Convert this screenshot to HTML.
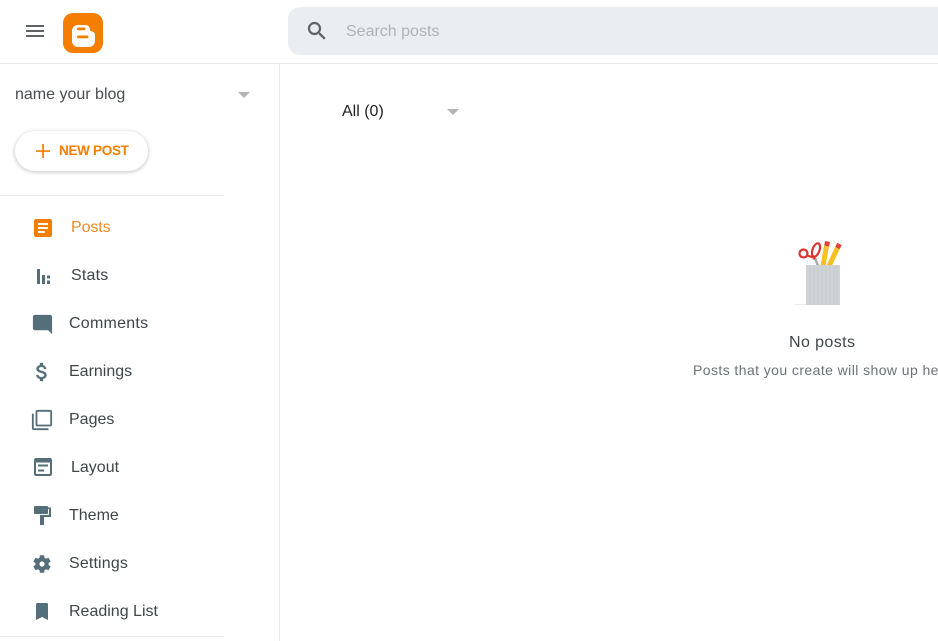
<!DOCTYPE html>
<html><head><meta charset="utf-8"><style>
html,body{margin:0;padding:0;background:#fff}
#p{position:relative;width:938px;height:641px;overflow:hidden;background:#fff;font-family:"Liberation Sans",sans-serif;font-size:16px;color:#3c4043}
#p>*{position:absolute}
.t{white-space:nowrap;line-height:20px}
.n{color:#3f4549}
svg.i{fill:#546e7a;width:24px;height:24px}
.c{width:0;height:0;border-left:6px solid transparent;border-right:6px solid transparent;border-top:6px solid #b4b4b4}
</style></head><body><div id="p">
<div style="left:0;top:63px;width:938px;height:1px;background:#e8eaed"></div>
<div style="left:279px;top:64px;width:1px;height:577px;background:#e8eaed"></div>
<div style="left:0;top:195px;width:224px;height:1px;background:#e8eaed"></div>
<div style="left:0;top:636px;width:224px;height:1px;background:#e8eaed"></div>

<div style="left:26px;top:25px;width:18px;height:2px;background:#5f6368"></div>
<div style="left:26px;top:30px;width:18px;height:2px;background:#5f6368"></div>
<div style="left:26px;top:35px;width:18px;height:2px;background:#5f6368"></div>

<svg style="left:63px;top:13px" width="40" height="40" viewBox="0 0 40 40"><rect width="40" height="40" rx="10" fill="#f57d00"/><path d="M15 12h7c3 0 5 2 5 4.500 0 1 .5 1.500 2 2 2 .6 3 1.600 3 3.500v6c0 3.500-2.800 6-6 6H15c-3.500 0-6-2.500-6-6V18c0-3.500 2.500-6 6-6z" fill="#fff"/><rect x="14" y="14.500" width="8.500" height="2.800" rx="1.400" fill="#f57d00"/><rect x="14" y="22.500" width="11.500" height="2.800" rx="1.400" fill="#f57d00"/></svg>

<div style="left:288px;top:7px;width:670px;height:48px;background:#ebeef1;border-radius:12px"></div>
<svg style="left:305px;top:19px;fill:#5f6368" width="24" height="24" viewBox="0 0 24 24"><path stroke="#5f6368" stroke-width=".3" d="M15.500 14h-.79l-.28-.27C15.410 12.590 16 11.110 16 9.500 16 5.910 13.090 3 9.500 3S3 5.910 3 9.500 5.910 16 9.500 16c1.610 0 3.090-.59 4.230-1.570l.27.28v.79l5 4.990L20.490 19l-4.990-5zm-6 0C7.010 14 5 11.990 5 9.500S7.010 5 9.500 5 14 7.010 14 9.500 11.990 14 9.500 14z"/></svg>
<div class="t" style="left:346px;top:22px;color:#aeb3b7">Search posts</div>

<div class="t" style="left:15px;top:85px;color:#4a4d50">name your blog</div>
<div class="c" style="left:238px;top:92px"></div>

<div style="left:15px;top:131px;width:133px;height:40px;border-radius:20px;background:#fff;box-shadow:0 1px 3px 1px rgba(60,64,67,.22)"></div>
<svg style="left:36px;top:144px" width="14" height="14" viewBox="0 0 14 14"><path d="M6.200 0h1.700v6.200H14v1.700H7.900V14H6.200V7.900H0V6.200h6.200z" fill="#f57d00"/></svg>
<div class="t" style="left:59px;top:141px;font-size:13.500px;font-weight:bold;color:#f57d00;letter-spacing:-.3px">NEW POST</div>

<svg class="i" style="left:31px;top:216px;fill:#f57d00" viewBox="0 0 24 24"><path d="M19 3H5c-1.100 0-2 .9-2 2v14c0 1.100.9 2 2 2h14c1.100 0 2-.9 2-2V5c0-1.100-.9-2-2-2zm-5 14H7v-2h7v2zm3-4H7v-2h10v2zm0-4H7V7h10v2z"/></svg>
<div class="t" style="left:71px;top:218px;color:#f08a24;letter-spacing:-.1px">Posts</div>

<svg style="left:37px;top:269px;fill:#546e7a" width="13" height="15" viewBox="0 0 13 15"><path d="M0 0h3v15H0zM5 6h3v9H5zM10 6.500h3v3h-3zM10 11.500h3V15h-3z"/></svg>
<div class="t n" style="left:71px;top:266px;letter-spacing:.2px">Stats</div>

<svg class="i" style="left:31px;top:313px;width:23px;height:23px" viewBox="0 0 24 24"><path d="M21.990 4c0-1.100-.89-2-1.990-2H4c-1.100 0-2 .9-2 2v12c0 1.100.9 2 2 2h14l4 4-.01-18z"/></svg>
<div class="t n" style="left:69px;top:314px;letter-spacing:.25px">Comments</div>

<svg class="i" style="left:30px;top:360px" viewBox="0 0 24 24"><path stroke="#546e7a" stroke-width=".3" d="M11.800 10.900c-2.270-.59-3-1.200-3-2.150 0-1.090 1.010-1.850 2.700-1.850 1.780 0 2.440.85 2.500 2.100h2.210c-.07-1.720-1.120-3.300-3.210-3.810V3h-3v2.160c-1.940.42-3.500 1.680-3.500 3.610 0 2.310 1.910 3.460 4.700 4.130 2.500.6 3 1.480 3 2.410 0 .69-.49 1.790-2.700 1.790-2.060 0-2.870-.92-2.980-2.100h-2.200c.12 2.190 1.760 3.420 3.680 3.830V21h3v-2.150c1.950-.37 3.500-1.500 3.500-3.550 0-2.840-2.430-3.810-4.700-4.400z"/></svg>
<div class="t n" style="left:69px;top:362px">Earnings</div>

<svg class="i" style="left:31px;top:409px;width:22px;height:22px" viewBox="0 0 24 24"><path d="M3 5H1v16c0 1.100.9 2 2 2h16v-2H3V5zm18-4H7c-1.100 0-2 .9-2 2v14c0 1.100.9 2 2 2h14c1.100 0 2-.9 2-2V3c0-1.100-.9-2-2-2zm0 16H7V3h14v14z"/></svg>
<div class="t n" style="left:69px;top:410px">Pages</div>

<svg class="i" style="left:31px;top:455px" viewBox="0 0 24 24"><path d="M19 3H5c-1.100 0-2 .9-2 2v14c0 1.100.9 2 2 2h14c1.100 0 2-.9 2-2V5c0-1.100-.9-2-2-2zm0 16H5V7.500h14V19zm-2-7.500H7v-2h10v2zm-4 5H7v-2h6v2z"/></svg>
<div class="t n" style="left:71px;top:458px">Layout</div>

<svg style="left:34px;top:506px;fill:#546e7a" width="18" height="20" viewBox="0 0 18 20"><path d="M1 0h12c.6 0 1 .4 1 1v6c0 .6-.4 1-1 1H1C.4 8 0 7.600 0 7V1c0-.6.4-1 1-1z"/><path d="M14 1.500h3V11h-7v8H6V9h8.500V8.500H15V3h-1z"/></svg>
<div class="t n" style="left:69px;top:506px">Theme</div>

<svg class="i" style="left:31px;top:553px;width:22px;height:22px" viewBox="0 0 24 24"><path fill-rule="evenodd" d="M19.140 12.940c.04-.3.06-.61.06-.94 0-.32-.02-.64-.07-.94l2.030-1.580c.18-.14.23-.41.12-.61l-1.920-3.320c-.12-.22-.37-.29-.59-.22l-2.390.96c-.5-.38-1.030-.7-1.620-.94l-.36-2.540c-.04-.24-.24-.41-.48-.41h-3.840c-.24 0-.43.17-.47.41l-.36 2.540c-.59.24-1.130.57-1.620.94l-2.390-.96c-.22-.08-.47 0-.59.22L2.740 8.870c-.12.21-.08.47.12.61l2.030 1.580c-.05.3-.09.63-.09.94s.02.64.07.94l-2.030 1.580c-.18.14-.23.41-.12.61l1.920 3.320c.12.22.37.29.59.22l2.390-.96c.5.38 1.030.7 1.620.94l.36 2.540c.05.24.24.41.48.41h3.840c.24 0 .44-.17.47-.41l.36-2.540c.59-.24 1.130-.56 1.620-.94l2.390.96c.22.08.47 0 .59-.22l1.920-3.320c.12-.22.07-.47-.12-.61l-2.010-1.580zM12 14.800a2.800 2.800 0 1 1 0-5.600 2.800 2.800 0 0 1 0 5.600z"/></svg>
<div class="t n" style="left:69px;top:554px;letter-spacing:.15px">Settings</div>

<svg style="left:36px;top:603px;fill:#546e7a" width="12" height="17" viewBox="0 0 12 17"><path d="M1.500 0h9c.9 0 1.500.6 1.500 1.500V17l-6-3-6 3V1.500C0 .6.600 0 1.500 0z"/></svg>
<div class="t n" style="left:69px;top:602px">Reading List</div>

<div class="t" style="left:342px;top:102px;color:#222">All (0)</div>
<div class="c" style="left:447px;top:109px"></div>

<svg style="left:790px;top:238px" width="60" height="70" viewBox="0 0 60 70">
<path d="M5 66h11v1H5z" fill="#ececec"/>
<path d="M33 28l3.500-20" stroke="#f5c022" stroke-width="5" fill="none"/>
<path d="M36.700 8l.8-4.500" stroke="#e04138" stroke-width="5" fill="none"/>
<path d="M39 28l8.500-18" stroke="#f5c022" stroke-width="5" fill="none"/>
<path d="M47.500 10l2-4" stroke="#e04138" stroke-width="5" fill="none"/>
<path d="M28 28l-3-8" stroke="#a8a8a8" stroke-width="2.500" fill="none"/>
<g fill="none" stroke="#d9352f" stroke-width="2.200"><circle cx="13.500" cy="15.500" r="4"/><ellipse cx="26" cy="12" rx="3.500" ry="7" transform="rotate(20 26 12)"/><path d="M17 17.500l8 2.500M24.500 18.500l-.5 3"/></g>
<rect x="16" y="27" width="34" height="40" fill="#cfd3d6"/>
<path d="M20 27v40M24 27v40M28 27v40M32 27v40M36 27v40M40 27v40M44 27v40M47 27v40" stroke="#c4c8cb" stroke-width="1"/>
</svg>

<div class="t" style="left:789px;top:333px;color:#3f4549;letter-spacing:.4px">No posts</div>
<div class="t" style="left:693px;top:360px;font-size:14px;color:#6b7378;letter-spacing:.42px">Posts that you create will show up here</div>
</div></body></html>
